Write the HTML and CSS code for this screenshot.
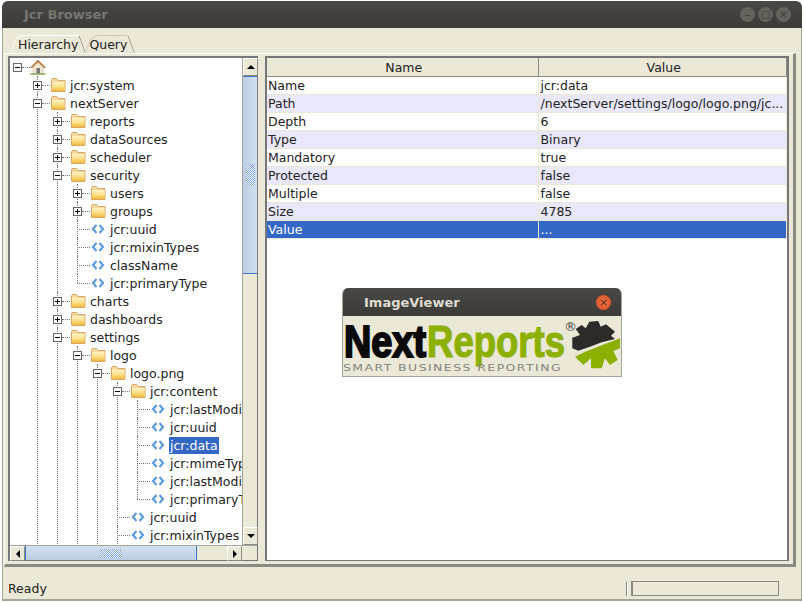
FILE: index.html
```html
<!DOCTYPE html>
<html lang="en">
<head>
    <meta charset="UTF-8">
    <title>Jcr Browser</title>
    <link rel="stylesheet" href="styles.css">
</head>
<body>
    <svg class="defs" width="0" height="0">
        <defs>
            <linearGradient id="folderFill" x1="0" y1="0" x2="0" y2="1">
                <stop offset="0" stop-color="#fff3c4"/>
                <stop offset="0.5" stop-color="#fbe08a"/>
                <stop offset="1" stop-color="#efb93f"/>
            </linearGradient>
        </defs>
        <symbol id="folder" viewBox="0 0 16 16">
            <path d="M1.500 3 L1.500 14.500 L15 14.500 L15 3.500 L8 3.500 L6.500 1.500 L2.500 1.500 Z" fill="#f3d9a0" stroke="#d9a663"/>
            <rect x="2" y="5" width="12.500" height="9" fill="url(#folderFill)"/>
        </symbol>
        <symbol id="leaf" viewBox="-2 -3 16 16">
            <path d="M4.500 1 L1 5 L4.500 9 M7.500 1 L11 5 L7.500 9" fill="none" stroke="#5b9be0" stroke-width="2.200"/>
        </symbol>
        <symbol id="home" viewBox="0 0 16 16">
            <path d="M8 1 L0.500 8.500 L2.500 8.500 L8 3.500 L13.500 8.500 L15.500 8.500 Z" fill="#c9793a" stroke="#a8612b" stroke-width="0.500"/>
            <path d="M3 8 L8 3.500 L13 8 L13 14.500 L3 14.500 Z" fill="#efe6cf" stroke="#b9ae94" stroke-width="0.500"/>
            <rect x="6.500" y="9" width="3.500" height="5.500" fill="#77797a"/>
            <path d="M0.500 15 H15.500" stroke="#7fa650" stroke-width="1.500"/>
        </symbol>
    </svg>

    <div class="window">
        <header class="titlebar">
            <h1>Jcr Browser</h1>
            <div class="win-buttons">
                <span class="win-btn">&#8211;</span>
                <span class="win-btn">&#9633;</span>
                <span class="win-btn">&#215;</span>
            </div>
        </header>

        <main class="content">
            <div class="tabs">
                <span class="tab active">Hierarchy</span>
                <span class="tab">Query</span>
            </div>

            <div class="tab-panel">
                <section class="tree-pane">
                    <div class="tree-top">
                        <div class="tree-view">
                            <ul class="tree">
                                <li class="last">
                                    <div class="row"><span class="handle minus"></span><span class="dash"></span><svg class="ico"><use href="#home"/></svg></div>
                                    <ul>
                                        <li>
                                            <div class="row"><span class="handle plus"></span><span class="dash"></span><svg class="ico"><use href="#folder"/></svg><span class="label">jcr:system</span></div>
                                        </li>
                                        <li>
                                            <div class="row"><span class="handle minus"></span><span class="dash"></span><svg class="ico"><use href="#folder"/></svg><span class="label">nextServer</span></div>
                                            <ul>
                                                <li><div class="row"><span class="handle plus"></span><span class="dash"></span><svg class="ico"><use href="#folder"/></svg><span class="label">reports</span></div></li>
                                                <li><div class="row"><span class="handle plus"></span><span class="dash"></span><svg class="ico"><use href="#folder"/></svg><span class="label">dataSources</span></div></li>
                                                <li><div class="row"><span class="handle plus"></span><span class="dash"></span><svg class="ico"><use href="#folder"/></svg><span class="label">scheduler</span></div></li>
                                                <li>
                                                    <div class="row"><span class="handle minus"></span><span class="dash"></span><svg class="ico"><use href="#folder"/></svg><span class="label">security</span></div>
                                                    <ul>
                                                        <li><div class="row"><span class="handle plus"></span><span class="dash"></span><svg class="ico"><use href="#folder"/></svg><span class="label">users</span></div></li>
                                                        <li><div class="row"><span class="handle plus"></span><span class="dash"></span><svg class="ico"><use href="#folder"/></svg><span class="label">groups</span></div></li>
                                                        <li><div class="row"><span class="dash long"></span><svg class="ico"><use href="#leaf"/></svg><span class="label">jcr:uuid</span></div></li>
                                                        <li><div class="row"><span class="dash long"></span><svg class="ico"><use href="#leaf"/></svg><span class="label">jcr:mixinTypes</span></div></li>
                                                        <li><div class="row"><span class="dash long"></span><svg class="ico"><use href="#leaf"/></svg><span class="label">className</span></div></li>
                                                        <li class="last"><div class="row"><span class="dash long"></span><svg class="ico"><use href="#leaf"/></svg><span class="label">jcr:primaryType</span></div></li>
                                                    </ul>
                                                </li>
                                                <li><div class="row"><span class="handle plus"></span><span class="dash"></span><svg class="ico"><use href="#folder"/></svg><span class="label">charts</span></div></li>
                                                <li><div class="row"><span class="handle plus"></span><span class="dash"></span><svg class="ico"><use href="#folder"/></svg><span class="label">dashboards</span></div></li>
                                                <li>
                                                    <div class="row"><span class="handle minus"></span><span class="dash"></span><svg class="ico"><use href="#folder"/></svg><span class="label">settings</span></div>
                                                    <ul>
                                                        <li>
                                                            <div class="row"><span class="handle minus"></span><span class="dash"></span><svg class="ico"><use href="#folder"/></svg><span class="label">logo</span></div>
                                                            <ul>
                                                                <li>
                                                                    <div class="row"><span class="handle minus"></span><span class="dash"></span><svg class="ico"><use href="#folder"/></svg><span class="label">logo.png</span></div>
                                                                    <ul>
                                                                        <li>
                                                                            <div class="row"><span class="handle minus"></span><span class="dash"></span><svg class="ico"><use href="#folder"/></svg><span class="label">jcr:content</span></div>
                                                                            <ul>
                                                                                <li><div class="row"><span class="dash long"></span><svg class="ico"><use href="#leaf"/></svg><span class="label">jcr:lastModified</span></div></li>
                                                                                <li><div class="row"><span class="dash long"></span><svg class="ico"><use href="#leaf"/></svg><span class="label">jcr:uuid</span></div></li>
                                                                                <li><div class="row"><span class="dash long"></span><svg class="ico"><use href="#leaf"/></svg><span class="label selected">jcr:data</span></div></li>
                                                                                <li><div class="row"><span class="dash long"></span><svg class="ico"><use href="#leaf"/></svg><span class="label">jcr:mimeType</span></div></li>
                                                                                <li><div class="row"><span class="dash long"></span><svg class="ico"><use href="#leaf"/></svg><span class="label">jcr:lastModifiedBy</span></div></li>
                                                                                <li class="last"><div class="row"><span class="dash long"></span><svg class="ico"><use href="#leaf"/></svg><span class="label">jcr:primaryType</span></div></li>
                                                                            </ul>
                                                                        </li>
                                                                        <li><div class="row"><span class="dash long"></span><svg class="ico"><use href="#leaf"/></svg><span class="label">jcr:uuid</span></div></li>
                                                                        <li><div class="row"><span class="dash long"></span><svg class="ico"><use href="#leaf"/></svg><span class="label">jcr:mixinTypes</span></div></li>
                                                                    </ul>
                                                                </li>
                                                            </ul>
                                                        </li>
                                                    </ul>
                                                </li>
                                            </ul>
                                        </li>
                                    </ul>
                                </li>
                            </ul>
                        </div>
                        <div class="vscroll">
                            <span class="sb-btn"><i class="arrow up"></i></span>
                            <div class="sb-track">
                                <div class="vthumb"><span class="vgrip"></span></div>
                            </div>
                            <span class="sb-btn"><i class="arrow down"></i></span>
                        </div>
                    </div>
                    <div class="hscroll">
                        <span class="sb-btn"><i class="arrow left"></i></span>
                        <div class="sb-track-h">
                            <div class="hthumb"><span class="hgrip"></span></div>
                        </div>
                        <span class="sb-btn"><i class="arrow right"></i></span>
                        <span class="sb-corner"></span>
                    </div>
                </section>

                <div class="splitter"></div>

                <section class="table-pane">
                    <table class="props">
                        <thead>
                            <tr><th>Name</th><th>Value</th></tr>
                        </thead>
                        <tbody>
                            <tr><td>Name</td><td>jcr:data</td></tr>
                            <tr><td>Path</td><td>/nextServer/settings/logo/logo.png/jc...</td></tr>
                            <tr><td>Depth</td><td>6</td></tr>
                            <tr><td>Type</td><td>Binary</td></tr>
                            <tr><td>Mandatory</td><td>true</td></tr>
                            <tr><td>Protected</td><td>false</td></tr>
                            <tr><td>Multiple</td><td>false</td></tr>
                            <tr><td>Size</td><td>4785</td></tr>
                            <tr class="selected-row"><td>Value</td><td>...</td></tr>
                        </tbody>
                    </table>
                </section>
            </div>

            <footer class="statusbar">
                <span class="status-text">Ready</span>
                <span class="status-sep"></span>
                <span class="progress"></span>
            </footer>
        </main>
    </div>

    <div class="viewer">
        <div class="viewer-title">
            <span>ImageViewer</span>
            <span class="viewer-close">&#215;</span>
        </div>
        <svg class="logo" width="280" height="60" viewBox="0 0 280 60">
            <text class="logo-next" x="2" y="41" textLength="82" lengthAdjust="spacingAndGlyphs">Next</text>
            <text class="logo-reports" x="85" y="41" textLength="138" lengthAdjust="spacingAndGlyphs">Reports</text>
            <text class="logo-reg" x="222" y="15">&#174;</text>
            <text class="logo-sub" x="1" y="55" textLength="219" lengthAdjust="spacingAndGlyphs">SMART BUSINESS REPORTING</text>
            <path d="M230.300 32.300 L230.300 21.700 L238 19 L233.700 13 L239.700 9 L243.700 12.300 L247.300 5.700 L256.300 5 L258.700 10.700 L264 8.300 L273 15.700 L269 19.700 L273 23 L259.700 26.300 L248 30.700 L236.300 34.700 Z" fill="#2d2a2a"/>
            <path d="M233 40.700 L243 35.700 L278 22.300 L278 32.300 L271.300 35 L275.700 44 L268 49 L263 42.300 L259.700 52.300 L249 52.300 L249 42.300 L241.300 49 Z" fill="#8cb000"/>
        </svg>
    </div>
</body>
</html>
```

FILE: styles.css
```css
* {
    box-sizing: border-box;
}
html, body {
    margin: 0;
    padding: 0;
    height: 100%;
    background: #fff;
    overflow: hidden;
}
body {
    font-family: "DejaVu Sans", sans-serif;
    font-size: 12px;
    color: #222;
    position: relative;
}
.defs {
    position: absolute;
}
ul {
    list-style: none;
    margin: 0;
    padding: 0;
}

/* window frame */
.window {
    margin: 1px 2px 0 2px;
    height: 600px;
    display: flex;
    flex-direction: column;
    border-radius: 6px 6px 0 0;
    overflow: hidden;
}
.titlebar {
    height: 27px;
    flex: none;
    display: flex;
    align-items: center;
    justify-content: space-between;
    padding: 0 11px 0 22px;
    background: linear-gradient(#4a4844, #3c3b37);
}
.titlebar h1 {
    margin: 0;
    font-size: 13px;
    font-weight: bold;
    color: #77766f;
}
.win-buttons {
    display: flex;
    gap: 3px;
}
.win-btn {
    width: 15px;
    height: 15px;
    border-radius: 50%;
    background: #64635e;
    color: #3c3b37;
    font-size: 10px;
    line-height: 15px;
    text-align: center;
}
.content {
    flex: 1;
    display: flex;
    flex-direction: column;
    background: #ebe8d8;
    border-left: 1px solid #a5a498;
    border-right: 1px solid #a5a498;
    border-bottom: 2px solid #a5a498;
}

/* tabs */
.tabs {
    height: 25px;
    flex: none;
    display: flex;
    align-items: flex-end;
    padding-left: 7px;
}
.tab {
    position: relative;
    height: 18px;
    line-height: 20px;
    padding: 0 7px 0 4px;
    font-size: 12.5px;
}
.tab.active {
    padding: 0 7px 0 8px;
}
.tab::before, .tab::after {
    content: "";
    position: absolute;
    top: 0;
    bottom: 0;
    width: 50%;
    border-top: 1px solid #c9c7b8;
    transform-origin: bottom;
}
.tab::before {
    left: 0;
    border-left: 1px solid #c9c7b8;
    border-radius: 7px 0 0 0;
    transform: skewX(-20deg);
}
.tab::after {
    right: 0;
    border-right: 1px solid #8c8b81;
    border-radius: 0 3px 0 0;
    transform: skewX(20deg);
}
.tab.active::before, .tab.active::after {
    border-top-color: #fff;
    border-left-color: #fff;
}

/* main panel */
.tab-panel {
    height: 514px;
    flex: none;
    display: flex;
    margin-left: 1px;
    margin-right: 5px;
    padding: 2px 4px 3px 3px;
    border-top: 1px solid #fff;
    border-right: 3px solid #8c8b81;
    border-bottom: 3px solid #8c8b81;
    border-left: 1px solid #fff;
}
.tree-pane {
    width: 250px;
    flex: none;
    display: flex;
    flex-direction: column;
    border: 1px solid #77777a;
    border-width: 2px 1px 1px 2px;
    background: #fff;
}
.tree-top {
    flex: 1;
    display: flex;
    min-height: 0;
}
.tree-view {
    flex: 1;
    min-width: 0;
    overflow: hidden;
    background: #fff;
    padding-left: 7px;
}
.tree {
    white-space: nowrap;
}
.tree ul {
    margin-left: 20px;
}
.tree li {
    position: relative;
}
.tree li::before {
    content: "";
    position: absolute;
    left: 0;
    top: 0;
    bottom: 0;
    border-left: 1px dotted #777;
}
.tree li.last::before {
    bottom: auto;
    height: 9px;
}
.tree > li::before {
    display: none;
}
.row {
    position: relative;
    height: 18px;
    display: flex;
    align-items: center;
}
.handle {
    width: 9px;
    height: 9px;
    margin-left: -4px;
    flex: none;
    border: 1px solid #666;
    background: #fff;
    position: relative;
}
.handle::before {
    content: "";
    position: absolute;
    left: 1px;
    right: 1px;
    top: 3px;
    height: 1px;
    background: #000;
}
.handle.plus::after {
    content: "";
    position: absolute;
    top: 1px;
    bottom: 1px;
    left: 3px;
    width: 1px;
    background: #000;
}
.dash {
    width: 8px;
    flex: none;
    border-top: 1px dotted #777;
}
.dash.long {
    width: 13px;
}
.ico {
    width: 16px;
    height: 16px;
    flex: none;
}
.label {
    margin-left: 3px;
    padding: 0 1px;
    line-height: 17px;
    font-size: 12.5px;
}
.label.selected {
    background: #3367c5;
    color: #fff;
}

/* scrollbars */
.vscroll {
    width: 15px;
    flex: none;
    display: flex;
    flex-direction: column;
    background: #ebe8d8;
    border-left: 1px solid #a5a498;
}
.sb-btn {
    width: 15px;
    height: 18px;
    flex: none;
    display: flex;
    align-items: center;
    justify-content: center;
    background: #ebe8d8;
    border: 1px solid #fff;
    border-right-color: #8c8b81;
    border-bottom-color: #8c8b81;
}
.sb-track {
    flex: 1;
}
.vthumb {
    height: 198px;
    display: flex;
    align-items: center;
    justify-content: center;
    background: linear-gradient(90deg, #bccee4, #d3e0ef);
    border: 1px solid #3f72c4;
    border-width: 1px 0;
}
.vgrip, .hgrip {
    background: repeating-conic-gradient(#fff 0 25%, #7ea3da 0 50%) 0 0 / 2px 2px;
}
.vgrip {
    width: 9px;
    height: 22px;
}
.hscroll {
    height: 15px;
    flex: none;
    display: flex;
    background: #ebe8d8;
    border-top: 1px solid #a5a498;
}
.hscroll .sb-btn {
    height: 15px;
}
.sb-track-h {
    flex: 1;
}
.hthumb {
    width: 172px;
    height: 100%;
    display: flex;
    align-items: center;
    justify-content: center;
    background: linear-gradient(#d3e0ef, #bccee4);
    border: 1px solid #3f72c4;
    border-width: 0 1px;
}
.hgrip {
    width: 22px;
    height: 9px;
}
.sb-corner {
    width: 15px;
    flex: none;
}
.arrow {
    width: 0;
    height: 0;
    border: 4px solid transparent;
}
.arrow.up {
    border-bottom-color: #000;
    border-top-width: 0;
}
.arrow.down {
    border-top-color: #000;
    border-bottom-width: 0;
}
.arrow.left {
    border-right-color: #000;
    border-left-width: 0;
}
.arrow.right {
    border-left-color: #000;
    border-right-width: 0;
}
.splitter {
    width: 7px;
    flex: none;
}

/* property table */
.table-pane {
    flex: 1;
    background: #fff;
    border: 1px solid #77777a;
    border-width: 2px 2px 1px 2px;
}
.props {
    width: 100%;
    border-collapse: collapse;
    table-layout: fixed;
    font-size: 12.5px;
}
.props th {
    height: 18px;
    padding: 2px 0 0 3px;
    font-weight: normal;
    line-height: 16px;
    background: #ebe8d8;
    border-right: 1px solid #8c8b81;
    border-bottom: 1px solid #8c8b81;
}
.props th:first-child {
    width: 271px;
}
.props td {
    height: 18px;
    padding: 0 1px;
    border-right: 1px solid #ebe8d8;
    border-bottom: 1px solid #ebe8d8;
    overflow: hidden;
    white-space: nowrap;
}
.props td + td {
    padding-left: 2px;
}
.props tbody tr:nth-child(even) {
    background: #e8e8fa;
}
.props tbody tr.selected-row {
    background: #3367c5;
    color: #fff;
}

/* status bar */
.statusbar {
    flex: 1;
    display: flex;
    align-items: center;
    padding: 11px 22px 0 5px;
}
.status-text {
    flex: 1;
    font-size: 12.5px;
}
.status-sep {
    width: 2px;
    height: 14px;
    margin-right: 3px;
    border-left: 1px solid #8c8b81;
    border-right: 1px solid #fff;
}
.progress {
    width: 148px;
    height: 15px;
    border: 1px solid #8c8b81;
    border-width: 1px 1px 1px 2px;
}

/* floating image viewer */
.viewer {
    position: absolute;
    left: 342px;
    top: 288px;
    width: 280px;
    height: 89px;
    border-radius: 6px 6px 0 0;
    overflow: hidden;
    background: #ebe8d8;
    border: 1px solid #a5a498;
    border-top: none;
}
.viewer-title {
    height: 28px;
    margin: 0 -1px;
    display: flex;
    align-items: center;
    justify-content: space-between;
    padding: 0 11px 0 22px;
    background: linear-gradient(#4a4844, #3c3b37);
    color: #dfdbd2;
    font-size: 13px;
    font-weight: bold;
}
.viewer-close {
    width: 15px;
    height: 15px;
    border-radius: 50%;
    background: radial-gradient(#f0784a, #d9481f);
    color: #5a2a18;
    font-size: 11px;
    font-weight: normal;
    line-height: 15px;
    text-align: center;
}
.logo {
    display: block;
    margin-left: -1px;
}
.logo-next, .logo-reports {
    font-family: "Liberation Sans", sans-serif;
    font-weight: bold;
    font-size: 44px;
}
.logo-next {
    fill: #0a0a0a;
    stroke: #0a0a0a;
    stroke-width: 2px;
}
.logo-reports {
    fill: #8cb000;
    stroke: #8cb000;
    stroke-width: 1.2px;
}
.logo-reg {
    font-family: "DejaVu Sans", sans-serif;
    font-size: 13px;
    fill: #444;
}
.logo-sub {
    font-family: "DejaVu Sans", sans-serif;
    font-size: 8.5px;
    letter-spacing: 1px;
    fill: #84847a;
}
```
